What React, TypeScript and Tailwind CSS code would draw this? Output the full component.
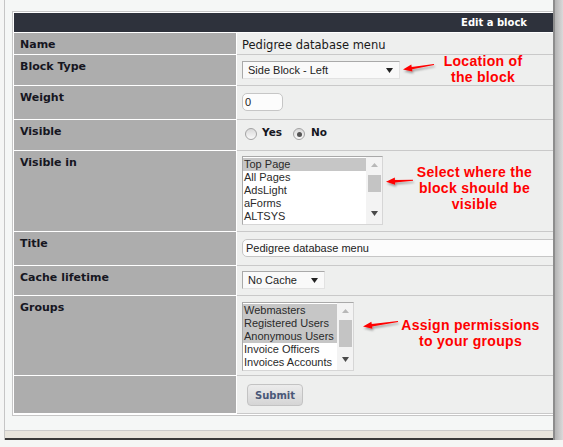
import React from "react";

const label = "font-['DejaVu_Sans',Verdana,sans-serif] font-bold text-[11px] leading-[14px] text-[#16161f]";
const arial = "font-['Liberation_Sans',Arial,sans-serif] text-[11px]";
const note = "font-['Liberation_Sans',Arial,sans-serif] font-bold text-[14px] leading-[16px] tracking-[0.3px] text-[#ff0000] text-center";

// red callout arrow, pointing left, tail a bit higher than the tip
const Arrow = ({ w, dy, id, className }: { w: number; dy: number; id: string; className: string }) => {
  const h = 18;
  const tx = 2, ty = h / 2 + dy / 2;
  const ex = w - 1, ey = h / 2 - dy / 2;
  const len = Math.hypot(ex - tx, ey - ty);
  const ux = (ex - tx) / len, uy = (ey - ty) / len;
  const px = -uy, py = ux;
  const bx = tx + ux * 9, by = ty + uy * 9;
  const pts = [
    [tx, ty],
    [bx + px * 3.6, by + py * 3.6],
    [bx + px * 1.2, by + py * 1.2],
    [ex + px * 0.5, ey + py * 0.5],
    [ex - px * 0.5, ey - py * 0.5],
    [bx - px * 1.2, by - py * 1.2],
    [bx - px * 3.6, by - py * 3.6],
  ]
    .map((p) => p.join(","))
    .join(" ");
  return (
    <svg width={w} height={h} className={`shrink-0 overflow-visible ${className}`}>
      <defs>
        <filter id={id} x="-20%" y="-50%" width="150%" height="250%">
          <feDropShadow dx="1" dy="2" stdDeviation="1" floodColor="#000" floodOpacity="0.35" />
        </filter>
      </defs>
      <polygon points={pts} fill="#ff0000" filter={`url(#${id})`} />
    </svg>
  );
};

const Down = ({ color }: { color: string }) => (
  <svg width="7" height="5" viewBox="0 0 7 5">
    <polygon points="0,0 7,0 3.5,5" fill={color} />
  </svg>
);

const Up = () => (
  <svg width="7" height="4" viewBox="0 0 7 4">
    <polygon points="0,4 7,4 3.5,0" fill="#b8b8b8" />
  </svg>
);

const Select = ({ value, className }: { value: string; className: string }) => (
  <div
    className={`flex items-center justify-between h-[18px] pl-[5px] pr-[6px] bg-[#f9f9f9] border border-t-[#a9a9a9] border-l-[#a9a9a9] border-r-[#e2e2e2] border-b-[#e2e2e2] text-[#222] ${arial} ${className}`}
  >
    <span>{value}</span>
    <Down color="#222" />
  </div>
);

const ListBox = ({
  items,
  selected,
  className,
  thumb,
}: {
  items: string[];
  selected: number;
  className: string;
  thumb: string;
}) => (
  <div
    className={`flex h-[69px] bg-white border border-t-[#a9a9a9] border-l-[#a9a9a9] border-r-[#d6d6d6] border-b-[#d6d6d6] ${className}`}
  >
    <div className="flex-1 pt-px">
      {items.map((it, i) => (
        <div
          key={it}
          className={`h-[13px] leading-[13px] pl-px whitespace-nowrap text-[#2a2a2a] ${arial} ${i < selected ? "bg-[#c6c6c6]" : ""}`}
        >
          {it}
        </div>
      ))}
    </div>
    <div className="w-[16px] flex flex-col items-center bg-[#f3f3f3]">
      <div className="h-[16px] flex items-center">
        <Up />
      </div>
      <div className={`w-[13px] bg-[#c4c4c4] ${thumb}`} />
      <div className="flex-1" />
      <div className="h-[14px] flex items-start pt-[1px]">
        <Down color="#4a4a4a" />
      </div>
    </div>
  </div>
);

const Radio = ({ on }: { on?: boolean }) => (
  <span className="mt-[8px] w-[12px] h-[12px] rounded-full border border-[#a3a3a3] bg-linear-to-b from-[#d9d9d9] to-[#fafafa] flex items-center justify-center shrink-0">
    {on && <span className="w-[5px] h-[5px] rounded-full bg-[#555]" />}
  </span>
);

const Row = ({ name, h, children }: { name: string; h: string; children?: React.ReactNode }) => (
  <div className={`flex ${h}`}>
    <div className={`w-[223px] shrink-0 bg-[#adadad] border-r border-b border-white pl-[6px] pt-[5px] ${label}`}>
      {name}
    </div>
    <div className="flex-1 flex items-start bg-[#eeefee] border-b border-[#c9c9c9] pl-[5px]">{children}</div>
  </div>
);

export default function App() {
  return (
    <div className="w-[563px] h-[447px] bg-[#f5f6f5] overflow-hidden">
      <div className="flex h-[440px] ml-[4px]">
        <div className="w-[549px] flex flex-col border-l border-[#c6c6c6] bg-[#f5f7f6]">
          <div className="flex-1 overflow-hidden pl-[7px] pt-[11px]">
            <div className="w-[600px] border border-[#c6c6c6] bg-white p-px">
              <div className="h-[20px] bg-[#2e323c] border-b border-white flex items-center justify-end pr-[83px] font-['DejaVu_Sans',Verdana,sans-serif] font-bold text-[10px] text-white">
                Edit a block
              </div>

              <Row name="Name" h="h-[22px]">
                <span className="pt-[5px] font-['DejaVu_Sans',Verdana,sans-serif] text-[11.5px] leading-[14px] text-[#1a1a1a]">
                  Pedigree database menu
                </span>
              </Row>

              <Row name="Block Type" h="h-[31px]">
                <Select value="Side Block - Left" className="mt-[6px] w-[158px]" />
                <Arrow id="a1" w={34} dy={5} className="ml-[1px] mt-[3px]" />
                <div className={`w-[96px] -mt-[2px] ${note}`}>
                  Location of
                  <br />
                  the block
                </div>
              </Row>

              <Row name="Weight" h="h-[34px]">
                <div className={`mt-[7px] w-[41px] h-[18px] rounded-[5px] border border-[#c6c6c6] bg-[#fcfcfc] pl-[2px] leading-[16px] text-[#222] ${arial}`}>
                  0
                </div>
              </Row>

              <Row name="Visible" h="h-[31px]">
                <span className="ml-[3px]" />
                <Radio />
                <span className="ml-[5px] mt-[5px] font-['DejaVu_Sans',Verdana,sans-serif] font-bold text-[10.5px] leading-[14px] text-[#16161f]">
                  Yes
                </span>
                <span className="ml-[11px]" />
                <Radio on />
                <span className="ml-[6px] mt-[5px] font-['DejaVu_Sans',Verdana,sans-serif] font-bold text-[10.5px] leading-[14px] text-[#16161f]">
                  No
                </span>
              </Row>

              <Row name="Visible in" h="h-[81px]">
                <ListBox
                  items={["Top Page", "All Pages", "AdsLight", "aForms", "ALTSYS"]}
                  selected={1}
                  className="mt-[5px] w-[141px]"
                  thumb="mt-[2px] h-[17px]"
                />
                <Arrow id="a2" w={30} dy={1.3} className="ml-[1px] mt-[21px]" />
                <div className={`w-[121px] mt-[13px] ${note}`}>
                  Select where the
                  <br />
                  block should be
                  <br />
                  visible
                </div>
              </Row>

              <Row name="Title" h="h-[34px]">
                <div className={`mt-[7px] w-[340px] h-[18px] rounded-[5px] border border-[#c6c6c6] bg-[#fcfcfc] pl-[3px] leading-[16px] text-[#222] ${arial}`}>
                  Pedigree database menu
                </div>
              </Row>

              <Row name="Cache lifetime" h="h-[30px]">
                <Select value="No Cache" className="mt-[5px] w-[83px]" />
              </Row>

              <Row name="Groups" h="h-[80px]">
                <ListBox
                  items={["Webmasters", "Registered Users", "Anonymous Users", "Invoice Officers", "Invoices Accounts"]}
                  selected={3}
                  className="mt-[6px] w-[112px]"
                  thumb="mt-[1px] h-[27px]"
                />
                <Arrow id="a3" w={38} dy={5} className="ml-[7px] mt-[19px]" />
                <div className={`w-[143px] mt-[21px] ${note}`}>
                  Assign permissions
                  <br />
                  to your groups
                </div>
              </Row>

              <Row name="" h="h-[38px]">
                <button className="mt-[8px] ml-[5px] w-[56px] h-[22px] rounded-[4px] border border-[#c3c3c3] bg-linear-to-b from-[#ececec] to-[#d5d5d5] font-['DejaVu_Sans',Verdana,sans-serif] font-bold text-[10px] text-[#4a5878]">
                  Submit
                </button>
              </Row>
            </div>
          </div>
          <div className="h-px bg-[#cbcbcb]" />
          <div className="h-[7px] bg-[#e8e5dd]" />
          <div className="h-[2px] bg-[#3a3a3a]" />
        </div>
        <div className="w-[2px] bg-[#8d8d8d]" />
        <div className="w-[8px] bg-linear-to-r from-[#b3b3b3] to-[#dadada]" />
      </div>
    </div>
  );
}
